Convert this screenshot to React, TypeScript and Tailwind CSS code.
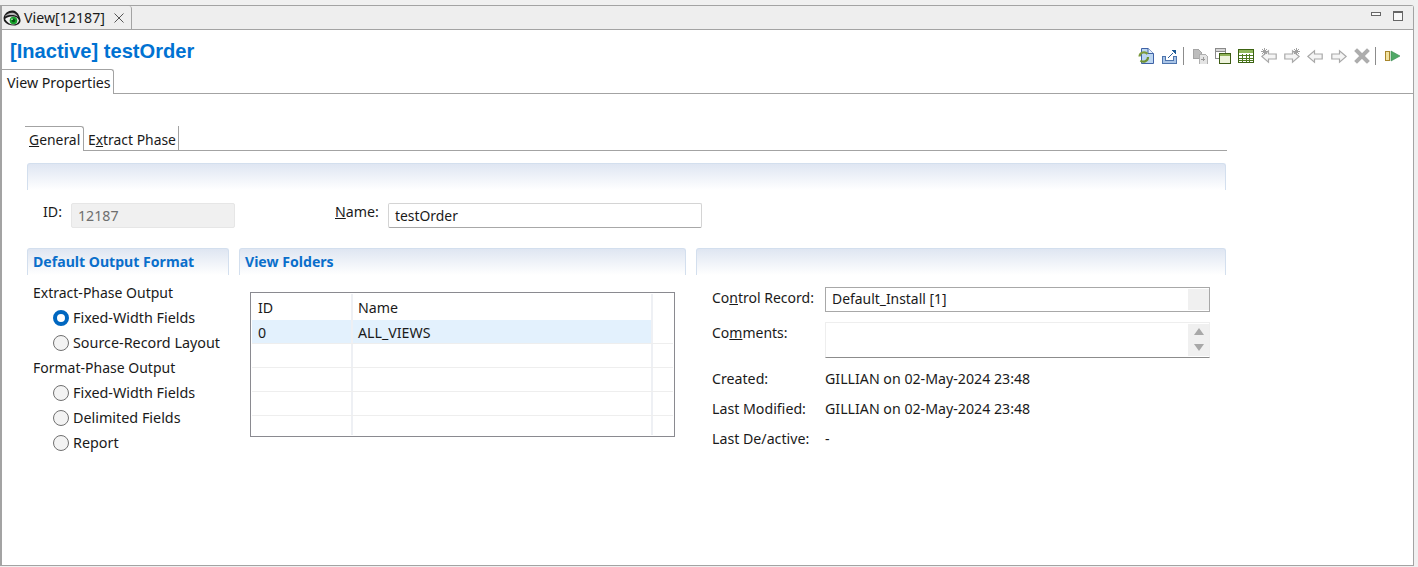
import React from "react";

const F = "font-['Noto_Sans','Open_Sans',sans-serif]";

function Eye() {
  return (
    <svg width="18" height="16" viewBox="0 0 18 16" className="shrink-0">
      <path d="M0.5 8 C1 3 6 0 10 0.5 C14 1 16.5 5 17.5 10 C17.8 13 15 15.5 11 15.5 C7 15.5 3 14 1 11 Z" fill="#1c1c1c" />
      <path d="M2 6 C4 3.5 8 2 11 3 C13 3.6 14.5 5.5 15 7 C12 4.5 6 4.5 2 6.5 Z" fill="#b4b4b4" />
      <path d="M2 9 C4 7 7 6.5 10 6.5 C13 6.5 15 8 16 10.5 C15.5 13 13 14.5 10 14.5 C7 14.5 4 12.5 2 9 Z" fill="#f2f2f2" />
      <circle cx="10.5" cy="10.5" r="3.8" fill="#16a02a" />
      <circle cx="10.5" cy="10.5" r="1.7" fill="#04500f" />
      <circle cx="9" cy="9.2" r="0.8" fill="#d8ffe0" />
    </svg>
  );
}

const Ic = ({ children }: { children: React.ReactNode }) => (
  <svg width="16" height="16" viewBox="0 0 16 16" shapeRendering="crispEdges" className="shrink-0">{children}</svg>
);

function Arrow({ dir, star, color = "#a9a9a9" }: { dir: "l" | "r"; star?: boolean; color?: string }) {
  const d = dir === "l" ? "M0.8 8.5 L7.5 2.8 V6 H15.2 V11 H7.5 V14.2 Z" : "M15.2 8.5 L8.5 2.8 V6 H0.8 V11 H8.5 V14.2 Z";
  return (
    <svg width="16" height="16" viewBox="0 0 16 16" className="shrink-0">
      <path d={d} fill="#f5f5f5" stroke={color} strokeWidth="1.2" />
      {star && (
        <path
          d={dir === "l" ? "M1 1 L6 6 M6 1 L1 6 M3.5 0 V7 M0 3.5 H7" : "M10 1 L15 6 M15 1 L10 6 M12.5 0 V7 M9 3.5 H16"}
          stroke="#a0a0a0"
          strokeWidth="1"
        />
      )}
    </svg>
  );
}

const Sep = () => <div className="w-px h-[18px] bg-[#8c8c8c] shrink-0" />;

function Toolbar() {
  return (
    <div className="flex items-center h-[18px]">
      <div>
        <svg width="16" height="16" viewBox="0 0 16 16" className="shrink-0">
          <path d="M3.5 0.5 H10 L15.5 5.5 V15.5 H3.5 Z" fill="#bcd6f2" stroke="#3f62a6" />
          <path d="M10 0.5 V5.5 H15.5" fill="#e6f0fb" stroke="#3f62a6" />
          <path d="M1.5 8.5 A4.5 4.5 0 0 1 9.5 6" fill="none" stroke="#7d9a3c" strokeWidth="2.2" />
          <path d="M10 9 A4.5 4.5 0 0 1 2.5 12.5" fill="none" stroke="#6f9130" strokeWidth="2.2" />
        </svg>
      </div>
      <div className="ml-[7px]">
        <Ic>
          <path d="M1 8 H4 V12 H12 V8 H15 V15 H1 Z" fill="#a9c4e6" stroke="#4d74ad" strokeWidth="1" />
          <path d="M7 10 L12 5" stroke="#2f5f99" strokeWidth="1" />
          <path d="M10 2 H15 V7 Z" fill="#1f5c98" />
        </Ic>
      </div>
      <div className="ml-[6px]"><Sep /></div>
      <div className="ml-[8px]">
        <Ic>
          <path d="M1 1 H6 L9 4 V10 H1 Z" fill="#bdbdbd" stroke="#a5a5a5" />
          <path d="M7 6 H13 L15 8 V16 H7 Z" fill="#e4e4e4" stroke="#b0b0b0" />
          <path d="M11 9 V13 M9 11 H13" stroke="#999" />
        </Ic>
      </div>
      <div className="ml-[7px]">
        <Ic>
          <rect x="0.5" y="0.5" width="10" height="10" fill="#fff" stroke="#8a8a8a" />
          <rect x="0.5" y="0.5" width="10" height="3" fill="#d6d6d6" stroke="#8a8a8a" />
          <rect x="4.5" y="5.5" width="11" height="10" fill="#eef3dc" stroke="#3d5c14" />
          <rect x="5" y="6" width="10" height="2" fill="#8fb158" />
        </Ic>
      </div>
      <div className="ml-[7px]">
        <Ic>
          <rect x="0.5" y="1.5" width="15" height="13" fill="#fff" stroke="#3c6312" />
          <rect x="1" y="2" width="14" height="3" fill="#8fb75a" />
          <path d="M1 7.5 H15 M1 10 H15 M1 12.5 H15 M4.5 6 V14 M8 6 V14 M11.5 6 V14" stroke="#4f7a20" />
        </Ic>
      </div>
      <div className="ml-[7px]"><Arrow dir="l" star /></div>
      <div className="ml-[7px]"><Arrow dir="r" star /></div>
      <div className="ml-[7px]"><Arrow dir="l" /></div>
      <div className="ml-[8px]"><Arrow dir="r" /></div>
      <div className="ml-[7px]">
        <svg width="16" height="16" viewBox="0 0 16 16" className="shrink-0">
          <path d="M3 3 L13 13 M13 3 L3 13" stroke="#adadad" strokeWidth="4" strokeLinecap="square" />
        </svg>
      </div>
      <div className="ml-[5px]"><Sep /></div>
      <div className="ml-[9px]">
        <Ic>
          <rect x="0.5" y="3.5" width="4" height="9" fill="#f3e3a0" stroke="#a8862c" />
          <path d="M6 3 L15 8 L6 13 Z" fill="#4fa866" stroke="#3d8a52" strokeWidth="0.6" shapeRendering="auto" />
        </Ic>
      </div>
    </div>
  );
}

function SectionBar({ children, className }: { children?: React.ReactNode; className?: string }) {
  return (
    <div className={`h-[27px] border-t border-l border-r border-[#d3dfee] rounded-t-[3px] bg-gradient-to-b from-[#dfe6f2] to-white pl-[5px] pt-[3px] leading-[20px] text-[14.1px] font-bold text-[#0a6fcb] ${className ?? ""}`}>
      {children}
    </div>
  );
}

function Radio({ label, checked }: { label: string; checked?: boolean }) {
  return (
    <div className="flex items-center h-[25px] pl-[25px] text-[14.35px]">
      {checked ? (
        <span className="w-[16px] h-[16px] rounded-full border-[4px] border-[#0067c0] bg-white shrink-0" />
      ) : (
        <span className="w-[16px] h-[16px] rounded-full border border-[#707070] bg-[#f3f3f3] shrink-0" />
      )}
      <span className="ml-[4px]">{label}</span>
    </div>
  );
}

function Row({ a, b, selected, last }: { a?: string; b?: string; selected?: boolean; last?: boolean }) {
  return (
    <div className={`flex ${last ? "h-[19px]" : "h-[24px] border-b border-[#eeeeee]"} leading-[25px]`}>
      <div className={`w-[101px] pl-[6px] border-r-2 border-[#eef0f4] ${selected ? "bg-[#e3f1fd]" : ""}`}>{a}</div>
      <div className={`w-[300px] pl-[5px] border-r-2 border-[#eef0f4] ${selected ? "bg-[#e3f1fd]" : ""}`}>{b}</div>
    </div>
  );
}

function Info({ label, value }: { label: string; value: string }) {
  return (
    <div className="flex h-[30px] leading-[30px]">
      <div className="w-[113px]">{label}</div>
      <div>{value}</div>
    </div>
  );
}

export default function App() {
  return (
    <div className={`${F} w-[1418px] h-[567px] overflow-hidden bg-[#f0f0f0] text-[14.2px] text-[#1a1a1a] pt-[5px]`}>
      <div className="w-[1414px] h-[561px] border border-l-2 border-[#a3a3a3] rounded-tr-[3px] bg-white flex flex-col">
        {/* view tab bar */}
        <div className="h-[24px] shrink-0 bg-[#eeeeee] border-b border-[#a3a3a3] flex items-stretch justify-between">
          <div className="w-[130px] h-[24px] border-r border-[#a3a3a3] rounded-tr-[3px] flex items-center pl-[1px] pb-[1px]">
            <Eye />
            <span className="ml-[3px] whitespace-nowrap">View[12187]</span>
            <svg width="10" height="10" viewBox="0 0 10 10" className="ml-[9px]">
              <path d="M0.5 0.5 L9.5 9.5 M9.5 0.5 L0.5 9.5" stroke="#555" strokeWidth="1" />
            </svg>
          </div>
          <div className="flex items-start pt-[5px] pr-[10px] gap-[12px]">
            <div className="w-[10px] h-[4px] mt-[1px] border border-[#666] bg-[#f8f8f8]" />
            <div className="w-[10px] h-[10px] border border-[#666] border-t-2 bg-[#f8f8f8]" />
          </div>
        </div>

        {/* title + toolbar */}
        <div className="h-[39px] shrink-0 flex items-start justify-between pr-[12px]">
          <div className="pl-[8px] pt-[9px] font-['Liberation_Sans',sans-serif] font-bold text-[20.1px] leading-[24px] text-[#0072d2]">[Inactive] testOrder</div>
          <div className="pt-[17px]"><Toolbar /></div>
        </div>

        {/* View Properties tab */}
        <div className="h-[25px] shrink-0 border-b border-[#a3a3a3] flex">
          <div className="w-[112px] h-[25px] border-t border-r border-[#a3a3a3] rounded-tr-[3px] bg-white pl-[5px] leading-[25px] whitespace-nowrap">View Properties</div>
        </div>

        {/* inner form */}
        <div className="pl-[23px] pt-[32px] w-[1227px]">
          <div className="h-[25px] border-b border-[#a3a3a3] flex w-[1202px] text-[13.9px]">
            <div className="w-[59px] h-[25px] border-t border-r border-[#a3a3a3] rounded-tr-[3px] bg-white pl-[4px] leading-[26px] whitespace-nowrap"><u>G</u>eneral</div>
            <div className="w-[95px] h-[24px] border-r border-[#a3a3a3] pl-[4px] leading-[27px] whitespace-nowrap">E<u>x</u>tract Phase</div>
          </div>

          <SectionBar className="mt-[12px] w-[1199px] ml-[2px]" />

          <div className="flex h-[25px] mt-[13px] ml-[2px]">
            <div className="w-[44px] pl-[16px] leading-[17px]">ID:</div>
            <div className="w-[164px] h-[25px] bg-[#f0f0f0] border border-[#e6e6e6] rounded-[2px] pl-[6px] leading-[23px] text-[#6e6e6e]">12187</div>
            <div className="w-[100px]" />
            <div className="w-[53px] leading-[17px]"><u>N</u>ame:</div>
            <div className="w-[314px] h-[25px] border border-[#d4d4d4] border-b-[#a8a8a8] rounded-[2px] pl-[6px] leading-[23px] text-[13.9px]">testOrder</div>
          </div>

          <div className="flex mt-[20px] ml-[2px] gap-[10px]">
            {/* left group */}
            <div className="w-[202px]">
              <SectionBar>Default Output Format</SectionBar>
              <div className="pl-[6px] pt-[5px] leading-[25px] text-[14px]">
                <div className="h-[25px]">Extract-Phase Output</div>
              </div>
              <div className="pl-[1px]">
                <Radio label="Fixed-Width Fields" checked />
                <Radio label="Source-Record Layout" />
              </div>
              <div className="pl-[6px] h-[25px] leading-[25px] text-[14px]">Format-Phase Output</div>
              <div className="pl-[1px]">
                <Radio label="Fixed-Width Fields" />
                <Radio label="Delimited Fields" />
                <Radio label="Report" />
              </div>
            </div>

            {/* middle group */}
            <div className="w-[447px]">
              <SectionBar>View Folders</SectionBar>
              <div className="ml-[11px] mt-[17px] w-[425px] h-[145px] border border-[#8a8a90] p-px">
                <div className="flex h-[26px] leading-[27px]">
                  <div className="w-[101px] pl-[6px] border-r-2 border-[#eef0f4]">ID</div>
                  <div className="w-[300px] pl-[5px] border-r-2 border-[#eef0f4]">Name</div>
                </div>
                <Row a="0" b="ALL_VIEWS" selected />
                <Row />
                <Row />
                <Row />
                <Row last />
              </div>
            </div>

            {/* right group */}
            <div className="w-[530px]">
              <SectionBar />
              <div className="pl-[16px] pt-[12px]">
                <div className="flex h-[25px]">
                  <div className="w-[113px] leading-[22px] whitespace-nowrap text-[14px]">Co<u>n</u>trol Record:</div>
                  <div className="w-[385px] h-[25px] border border-[#a8a8a8] flex justify-between pl-[6px] py-px leading-[20px] text-[13.9px]">
                    <span>Default_Install [1]</span>
                    <div className="w-[21px] bg-[#f0f0f0]" />
                  </div>
                </div>
                <div className="flex h-[36px] mt-[10px]">
                  <div className="w-[113px] leading-[22px] text-[14px]">Co<u>m</u>ments:</div>
                  <div className="w-[385px] h-[36px] border border-[#eeeeee] border-b-[#8c8c8c] flex justify-end py-px">
                    <div className="w-[21px] bg-[#f0f0f0] flex flex-col items-center justify-between pt-[4px] pb-[5px]">
                      <div className="w-0 h-0 border-l-[5px] border-r-[5px] border-b-[7px] border-l-transparent border-r-transparent border-b-[#a8a8a8]" />
                      <div className="w-0 h-0 border-l-[5px] border-r-[5px] border-t-[7px] border-l-transparent border-r-transparent border-t-[#a8a8a8]" />
                    </div>
                  </div>
                </div>
                <div className="mt-[6px]">
                  <Info label="Created:" value="GILLIAN on 02-May-2024 23:48" />
                  <Info label="Last Modified:" value="GILLIAN on 02-May-2024 23:48" />
                  <Info label="Last De/active:" value="-" />
                </div>
              </div>
            </div>
          </div>
        </div>
      </div>
    </div>
  );
}
